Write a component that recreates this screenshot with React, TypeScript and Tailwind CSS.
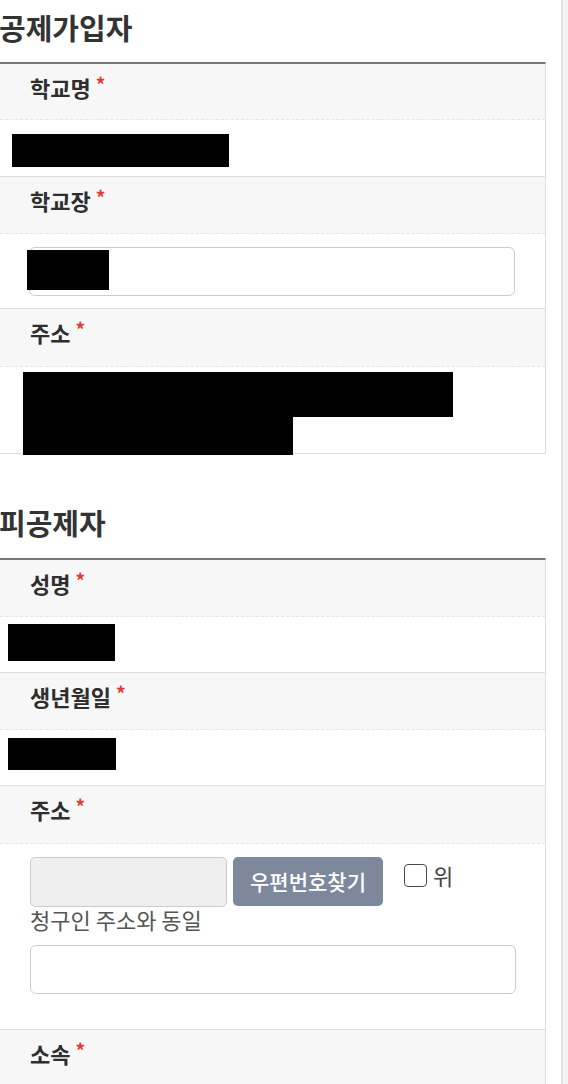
import React from "react";

const Req = () => (
  <span className="ml-[5px] text-[19px] font-bold text-[#e53935] align-top leading-[22px]">*</span>
);

const Header = ({ label, h = "h-[56px]" }: { label: string; h?: string }) => (
  <div className={`${h} bg-[#f7f7f7] border-b border-dashed border-[#e6e6e6] pl-[30px] pt-[9px]`}>
    <span className="text-[22px] font-bold leading-[28px] text-[#2e2e2e]">{label}</span>
    <Req />
  </div>
);

const Black = ({ cls }: { cls: string }) => <div className={`bg-black ${cls}`} />;

export default function App() {
  return (
    <div className="w-[568px] h-[1084px] overflow-hidden bg-white flex font-['Noto_Sans_CJK_KR','Noto_Sans',sans-serif]">
      <div className="w-[546px] shrink-0">
        {/* Section 1 */}
        <h2 className="pt-[9px] pb-[17px] text-[29px] leading-[36px] font-bold text-[#333] -ml-[1px]">공제가입자</h2>
        <div className="border-t-2 border-[#767676] border-r border-r-[#dddddd] border-b border-b-[#dddddd]">
          <Header label="학교명" />
          <div className="h-[57px] border-b border-[#dddddd] pl-[12px] pt-[14px]">
            <Black cls="w-[217px] h-[33px]" />
          </div>
          <Header label="학교장" h="h-[57px]" />
          <div className="h-[75px] border-b border-[#dddddd] pl-[29px] pt-[13px]">
            <div className="relative w-[486px] h-[49px] rounded-[6px] border border-[#cccccc] bg-white">
              <Black cls="absolute -left-[3px] top-[2px] w-[82px] h-[40px]" />
            </div>
          </div>
          <Header label="주소" h="h-[58px]" />
          <div className="h-[86px] pl-[23px] pt-[5px]">
            <Black cls="w-[430px] h-[45px]" />
            <Black cls="relative z-10 w-[270px] h-[38px]" />
          </div>
        </div>

        {/* Section 2 */}
        <h2 className="mt-[50px] pb-[18px] text-[29px] leading-[36px] font-bold text-[#333] -ml-[1px]">피공제자</h2>
        <div className="border-t-2 border-[#767676] border-r border-r-[#dddddd]">
          <Header label="성명" h="h-[57px]" />
          <div className="h-[56px] border-b border-[#dddddd] pl-[8px] pt-[7px]">
            <Black cls="w-[107px] h-[37px]" />
          </div>
          <Header label="생년월일" h="h-[57px]" />
          <div className="h-[56px] border-b border-[#dddddd] pl-[8px] pt-[8px]">
            <Black cls="w-[108px] h-[32px]" />
          </div>
          <Header label="주소" h="h-[58px]" />
          <div className="h-[186px] border-b border-[#dddddd] pl-[30px] pt-[13px]">
            <div className="flex items-start">
              <div className="w-[197px] h-[50px] rounded-[5px] border border-[#cccccc] bg-[#efefef]" />
              <button className="ml-[6px] w-[150px] h-[49px] rounded-[5px] bg-[#7e889d] text-white text-[21px] font-medium leading-[49px] text-center">
                우편번호찾기
              </button>
              <div className="ml-[21px] mt-[7px] w-[23px] h-[23px] rounded-[4px] border-[1.5px] border-[#4a4a4a] bg-white" />
              <span className="ml-[6px] mt-[4px] text-[22px] leading-[28px] text-[#444]">위</span>
            </div>
            <div className="text-[22px] leading-[28px] text-[#555] -mt-[2px]">청구인 주소와 동일</div>
            <div className="mt-[12px] w-[486px] h-[49px] rounded-[6px] border border-[#cccccc] bg-white" />
          </div>
          <Header label="소속" h="h-[57px]" />
        </div>
      </div>
      <div className="w-[15px] shrink-0 bg-white" />
      <div className="w-[2px] shrink-0 bg-[#e3e3e3]" />
      <div className="flex-1 bg-[#f4f4f4]" />
    </div>
  );
}
